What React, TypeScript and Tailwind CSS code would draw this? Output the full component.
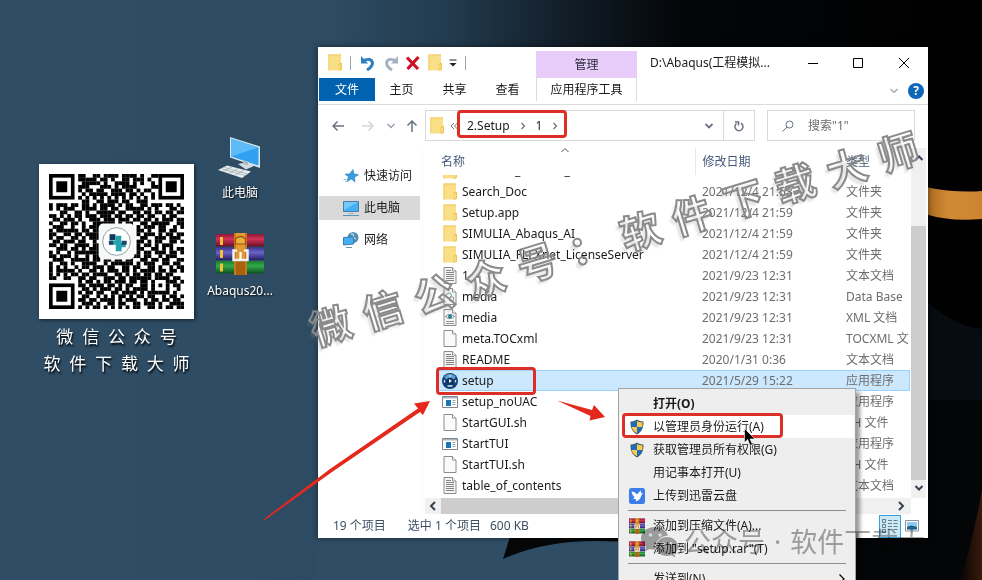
import type { ReactNode } from 'react';

const QR_ROWS = [
  '........##..##.####.####.#..##.......',
  '........#####.##.#..##.###.#.........',
  '.........#####.#..####.#.#..#........',
  '........###...###.#.####....##.......',
  '........#.##.##..###.##.#.##.........',
  '.........#.#####.####.##.#..#........',
  '........#.#.#.#.#.#.#.#.#.#.#........',
  '.........##..##.###.##..###..........',
  '#.###.##.##.#.####.#.##..##.###.##.#.',
  '#.#.###..####.##.##..#####.#.#...##.#',
  '...##..##.#..#####.##..##.##.##.##.##',
  '##.#.#.##.###.###.##.##.##.##..#.##..',
  '.##.###.#..###.###.###.##.##.#.###.##',
  '#..##.##.#..######.#.##..##.#####..##',
  '.###..#..#.###.#........#.###.##..#.#',
  '#.######.##.##..........##.#..##.##..',
  '##..##.##.####..........#.###.#.##.##',
  '#.##..##.#.###...........##..###.###.',
  '.##.###.##..#...........##.#.##..##.#',
  '##.##..####.##..........#.##.#.###...',
  '..###.##.#.###..........##..##.#.#.##',
  '#.#..#.#######..........#.##.###.##.#',
  '##.###.#..#.####.......##.##..#.###..',
  '.###..#####.##.##.##.##..##.##.##..##',
  '#..##.#..####..#.######.#.###..##.##.',
  '#.#.#..#.##.###.##..##.##..##.#..#.##',
  '#.#####.#..##.#.###.##.#.####.##.##.#',
  '#.#.#.##.##.####..##.#.##.##.##.##...',
  '##..##..##.##..###.##.######.####.##.',
  '........#.##.#.##.###.##.##.#...###.#',
  '........##.####.##.#.##..##.#.#.#.##.',
  '.........##.#.###.##.#.####.#...#..#.',
  '........#.##.##..##.####.#.######.#..',
  '.........##..#.#.#.##.#.##.##..#.##.#',
  '........##.##.####.#.###..#.##.##.##.',
  '.........###.#..##.##..##.###.#..####',
  '........#.#.##.#.#.#.#.##..##.#.##.##',
];

function QrFinder({ x, y }: { x: number; y: number }) {
  return (
    <g>
      <rect x={x} y={y} width="7" height="7" fill="#000" />
      <rect x={x + 1} y={y + 1} width="5" height="5" fill="#fff" />
      <rect x={x + 2} y={y + 2} width="3" height="3" fill="#000" />
    </g>
  );
}

function QrCode() {
  return (
    <svg viewBox="0 0 37 37" className="block w-full" role="img" aria-label="QR">
      <g>
        {QR_ROWS.map((row, y) =>
          row.split('').map((cell, x) => (cell === '#' ? <rect key={`${x}-${y}`} x={x} y={y} width="1.040" height="1.040" /> : null)),
        )}
      </g>
      <QrFinder x={0} y={0} />
      <QrFinder x={30} y={0} />
      <QrFinder x={0} y={30} />
      <rect x="13.6" y="13.6" width="9.8" height="9.8" rx="1.2" fill="#f7f8f8" />
      <circle cx="18.5" cy="18.5" r="3.8" fill="#fff" stroke="#6b7f86" strokeWidth=".2" />
      <path d="M16.6 16.5h1.6v1.6h-1.6z" fill="#123a5a" />
      <path d="M18.2 16.9h1.6v2h1.2v1.2h-1.1v1.1h-1.6v-1.8h-1.7v-1.2h1.6z" fill="#22a3ae" />
      <path d="M19.9 18.3h1.4v1.1h-1.4zM16.4 18.3h1.2v1.1h-1.2z" fill="#1d4a6b" />
    </svg>
  );
}

function Folder({ className = '' }: { className?: string }) {
  return (
    <svg viewBox="0 0 14 17" className={`h-[17px] w-[14px] shrink-0 ${className}`}>
      <path d="M.5 .5h12.500v16H.5z" fill="#fbdf86" />
      <path d="M.5 .5h12.500v1H.5zM.5 .5h1v16h-1z" fill="#f0cb60" />
      <path d="M10.500 10.500l1-1.500h2.500v6.500l-1 1h-2.500z" fill="#efc650" />
      <path d="M11.500 10.500h1v5h-1z" fill="#fdeeb4" />
    </svg>
  );
}

function Doc({ kind }: { kind: 'text' | 'blank' | 'db' | 'xml' }) {
  return (
    <svg viewBox="0 0 14 17" className="h-[17px] w-[14px] shrink-0">
      <path d="M1 .5h8.500l3.500 3.500v12.500H1z" fill={kind === 'blank' ? '#fbfbfb' : '#f4f4f4'} stroke="#8c8c8c" />
      <path d="M9.500 .5V4H13" fill="#fff" stroke="#8c8c8c" />
      {kind === 'text' && <path d="M3 5.500h8M3 7.500h8M3 9.500h8M3 11.500h8M3 13.500h8M3 3.500h5" stroke="#858585" />}
      {kind === 'db' && (
        <g fill="none" stroke="#5f9ea0">
          <circle cx="6" cy="7.500" r="2.500" />
          <circle cx="8.500" cy="11" r="2.300" stroke="#8b9498" />
        </g>
      )}
      {kind === 'xml' && (
        <g>
          <path d="M2.500 7.500Q7 3.500 11.500 7.500Q7 11.500 2.500 7.500" fill="#fff" stroke="#6c8a94" />
          <circle cx="7" cy="7.500" r="2" fill="#2b7f8e" />
          <path d="M3 12.500h8M3 14.500h8" stroke="#999" />
        </g>
      )}
    </svg>
  );
}

function ExeIcon() {
  return (
    <svg viewBox="0 0 16 12" className="h-[12px] w-[16px] shrink-0">
      <path d="M.5 .5h15v11H.5z" fill="#fff" stroke="#7d8792" />
      <path d="M1 1h14v1.500H1z" fill="#aab4bf" />
      <path d="M4 4h5v6H4z" fill="#1977b8" />
      <path d="M10.500 4.500h3M10.500 6.500h3M10.500 8.500h3" stroke="#9aa3ad" />
    </svg>
  );
}

function SetupIcon() {
  return (
    <svg viewBox="0 0 16 16" className="h-4 w-4 shrink-0">
      <circle cx="8" cy="8" r="8" fill="#123f73" />
      <ellipse cx="8" cy="4" rx="5.500" ry="3" fill="#5b9fd0" />
      <circle cx="8" cy="8" r="3.200" fill="#0d2f5c" />
      <path d="M7 6v4l3-2z" fill="#e8f4ff" />
      <path d="M8 2v2M2.500 7v2.500M13.500 7v2.500M5.500 13h5" stroke="#cfe6f8" strokeWidth="1.300" />
    </svg>
  );
}

function Shield() {
  return (
    <svg viewBox="0 0 16 16" className="h-4 w-4">
      <path d="M8 .5C10 2 12.500 2.500 14.500 2.500 14.800 9 12.500 13 8 15.500 3.500 13 1.200 9 1.500 2.500 3.500 2.500 6 2 8 .5z" fill="#3e5a6b" />
      <path d="M8 2v6H2.600C2.500 6.600 2.400 5 2.500 3.500 4.500 3.400 6.500 3 8 2z" fill="#1c6fbf" />
      <path d="M8 2v6h5.400c.1-1.400.2-3 .1-4.500C11.500 3.400 9.500 3 8 2z" fill="#fbc94a" />
      <path d="M8 8v6.300C4.800 12.500 3.100 10.500 2.600 8z" fill="#fbc94a" />
      <path d="M8 8v6.300c3.200-1.800 4.900-3.800 5.400-6.300z" fill="#1c6fbf" />
    </svg>
  );
}

function RarIcon({ className = '' }: { className?: string }) {
  return (
    <svg viewBox="0 0 48 42" preserveAspectRatio="none" className={className}>
      <defs>
        <linearGradient id="rarRed" x1="0" y1="0" x2="0" y2="1">
          <stop offset="0" stopColor="#8d1733" /><stop offset=".4" stopColor="#d13357" /><stop offset="1" stopColor="#6b0f26" />
        </linearGradient>
        <linearGradient id="rarBlue" x1="0" y1="0" x2="0" y2="1">
          <stop offset="0" stopColor="#3b3590" /><stop offset=".4" stopColor="#6a63c8" /><stop offset="1" stopColor="#262062" />
        </linearGradient>
        <linearGradient id="rarGreen" x1="0" y1="0" x2="0" y2="1">
          <stop offset="0" stopColor="#1a7d30" /><stop offset=".4" stopColor="#34ab4b" /><stop offset="1" stopColor="#0d4e1c" />
        </linearGradient>
      </defs>
      <path d="M0 1h48v12.500H0z" fill="url(#rarRed)" />
      <path d="M0 14.500h48v12.500H0z" fill="url(#rarBlue)" />
      <path d="M0 28h48v12.500H0z" fill="url(#rarGreen)" />
      <path d="M4 4h3v8H4zM4 17h3v8H4zM4 30.500h3v8H4z" fill="#f5c033" />
      <path d="M18 0h13v42H18z" fill="#c47a1c" />
      <path d="M20 0h9v42h-9z" fill="#e39a31" />
      <path d="M19.500 11V6q5-5 10 0v5z" fill="#f0ad3e" stroke="#8f5410" strokeWidth="1.200" />
      <path d="M20 28h9v14h-9z" fill="#a9600f" />
      <path d="M21 17.500h-3.500v9.500h14v-9.500H28" fill="none" stroke="#eef0f2" strokeWidth="2.500" />
      <path d="M24.500 19v8" stroke="#fff" strokeWidth="2.200" />
    </svg>
  );
}

function Monitor() {
  return (
    <svg viewBox="0 0 18 16" className="h-4 w-[18px] shrink-0">
      <path d="M1.500 1.500h15v10h-15z" fill="#43b0f5" stroke="#4b7da3" />
      <path d="M2 2h14L2 10z" fill="#75c9fb" />
      <path d="M6 13.500h6" stroke="#9bb6c9" />
      <path d="M1 15.500h16" stroke="#5f90b5" />
    </svg>
  );
}

function NetworkIcon() {
  return (
    <svg viewBox="0 0 18 18" className="h-[18px] w-[18px] shrink-0">
      <circle cx="11" cy="6.500" r="5.500" fill="#4f8fb5" />
      <path d="M9 2.500q3 .5 2.500 2.500t2.500 3" stroke="#b9dcec" fill="none" strokeWidth="1.300" />
      <path d="M1.500 6.500l10-.5v7l-10 1z" fill="#43b0f5" stroke="#397eaf" />
      <path d="M4 16.500h6" stroke="#7096ad" />
    </svg>
  );
}

function StarIcon() {
  return (
    <svg viewBox="0 0 18 16" className="h-4 w-[18px] shrink-0">
      <path d="M11 1.500l1 4.500 4.500.8-4 2.400.5 4.800-3.500-3-4.500 2.500 1.500-4.700-3.500-2.600 4.700-.4z" fill="#3b9be0" stroke="#2a7dbb" strokeWidth=".6" />
      <path d="M1.500 11.500h3M3 13.500h2" stroke="#8bc2e8" />
    </svg>
  );
}

function Stroke({ d, className, width = 1.5 }: { d: string; className: string; width?: number }) {
  return (
    <svg viewBox="0 0 12 12" className={`h-3 w-3 shrink-0 ${className}`} fill="none" stroke="currentColor" strokeWidth={width}>
      <path d={d} />
    </svg>
  );
}

const CHEVRON_DOWN = 'M2.500 4L6 7.500L9.500 4';
const CHEVRON_RIGHT = 'M4.500 3L7.500 6L4.500 9';
const CHEVRON_LEFT = 'M8 2L4 6l4 4';
const CHEVRON_UP = 'M2.500 8L6 4.500 9.500 8';

type FileRow = { name: string; date: string; type: string; icon: ReactNode; selected?: boolean };

const FILES: FileRow[] = [
  { name: 'Search_Doc', date: '2021/12/4 21:53', type: '文件夹', icon: <Folder /> },
  { name: 'Setup.app', date: '2021/12/4 21:59', type: '文件夹', icon: <Folder /> },
  { name: 'SIMULIA_Abaqus_AI', date: '2021/12/4 21:59', type: '文件夹', icon: <Folder /> },
  { name: 'SIMULIA_FLEXnet_LicenseServer', date: '2021/12/4 21:59', type: '文件夹', icon: <Folder /> },
  { name: '1', date: '2021/9/23 12:31', type: '文本文档', icon: <Doc kind="text" /> },
  { name: 'media', date: '2021/9/23 12:31', type: 'Data Base', icon: <Doc kind="db" /> },
  { name: 'media', date: '2021/9/23 12:31', type: 'XML 文档', icon: <Doc kind="xml" /> },
  { name: 'meta.TOCxml', date: '2021/9/23 12:31', type: 'TOCXML 文', icon: <Doc kind="blank" /> },
  { name: 'README', date: '2020/1/31 0:36', type: '文本文档', icon: <Doc kind="text" /> },
  { name: 'setup', date: '2021/5/29 15:22', type: '应用程序', icon: <SetupIcon />, selected: true },
  { name: 'setup_noUAC', date: '', type: '应用程序', icon: <ExeIcon /> },
  { name: 'StartGUI.sh', date: '', type: 'SH 文件', icon: <Doc kind="blank" /> },
  { name: 'StartTUI', date: '', type: '应用程序', icon: <ExeIcon /> },
  { name: 'StartTUI.sh', date: '', type: 'SH 文件', icon: <Doc kind="blank" /> },
  { name: 'table_of_contents', date: '', type: '文本文档', icon: <Doc kind="text" /> },
];

function Wallpaper() {
  return (
    <svg viewBox="0 0 982 580" preserveAspectRatio="none" className="absolute inset-0 h-full w-full">
      <defs>
        <linearGradient id="sky" x1="0" y1="0" x2="1" y2="0">
          <stop offset="0" stopColor="#2f4e66" />
          <stop offset=".34" stopColor="#2d4b62" />
          <stop offset=".46" stopColor="#223a4d" />
          <stop offset=".58" stopColor="#111d27" />
          <stop offset=".7" stopColor="#030507" />
          <stop offset="1" stopColor="#000" />
        </linearGradient>
        <linearGradient id="band" x1="0" y1="0" x2="1" y2="0">
          <stop offset="0" stopColor="#a9681f" /><stop offset=".4" stopColor="#d08a35" /><stop offset="1" stopColor="#cc8431" />
        </linearGradient>
        <linearGradient id="ember" x1="0" y1="0" x2="1" y2="0">
          <stop offset="0" stopColor="#060504" /><stop offset="1" stopColor="#3a1a0c" />
        </linearGradient>
      </defs>
      <path d="M0 0h982v580H0z" fill="url(#sky)" />
      <path d="M318 520h350v60H318z" fill="#2f4e66" />
      <path d="M512 530L503 559Q545 540 600 541L640 542V530z" fill="#050709" />
      <path d="M850 400h132v180H850z" fill="#040506" />
      <path d="M925 300Q960 330 982 328V400H925z" fill="#070b12" />
      <path d="M925 187Q955 193 982 191V219Q950 222 925 214z" fill="url(#band)" />
      <path d="M982 490V580H960Q973 540 982 490z" fill="url(#ember)" />
    </svg>
  );
}

function TitleBar() {
  return (
    <div className="flex h-[31px] items-center">
      <div className="flex w-[218px] shrink-0 items-center pl-2.5">
        <Folder />
        <span className="ml-2 h-3.5 w-px bg-gray-400" />
        <button aria-label="撤消" className="ml-[9px] h-4 w-4">
          <svg viewBox="0 0 16 16" className="h-4 w-4" fill="none" stroke="#2f7ec4" strokeWidth="3">
            <path d="M4 5.500Q11 2.500 12.500 7.500Q12.500 12 7 15" />
            <path d="M1 1v7.500h7z" fill="#2f7ec4" stroke="none" />
          </svg>
        </button>
        <button aria-label="恢复" className="ml-[7px] h-4 w-4">
          <svg viewBox="0 0 16 16" className="h-4 w-4" fill="none" stroke="#a5b2c6" strokeWidth="3">
            <path d="M12 5.500Q5 2.500 3.500 7.500Q3.500 12 9 15" />
            <path d="M15 1v7.500H8z" fill="#a5b2c6" stroke="none" />
          </svg>
        </button>
        <button aria-label="删除" className="ml-1.5 h-4 w-4">
          <svg viewBox="0 0 16 16" className="h-4 w-4" stroke="#ce1126" strokeWidth="3.200">
            <path d="M2 2.500l11 11.500M13.500 2L2.500 14" />
          </svg>
        </button>
        <Folder className="ml-[7px]" />
        <button aria-label="自定义快速访问工具栏" className="ml-[5px] h-3 w-3">
          <svg viewBox="0 0 12 12" className="h-3 w-3"><path d="M2.500 2.500h7v1h-7zM2.500 6h7L6 9.500z" fill="#222" /></svg>
        </button>
        <span className="ml-1.5 h-3.5 w-px bg-gray-400" />
      </div>
      <div className="flex h-full w-[101px] shrink-0 items-center justify-center pt-1">
        <span className="flex h-[27px] w-full items-center justify-center bg-[#e8cdfb] text-[#2b2b3b]">管理</span>
      </div>
      <span className="ml-[13px] flex-1 truncate">D:\Abaqus(工程模拟...</span>
      <div className="flex h-full shrink-0 pr-px">
        <button aria-label="最小化" className="flex w-[45px] items-center justify-center"><Stroke d="M1 6.500h10" width={1} className="text-black" /></button>
        <button aria-label="最大化" className="flex w-[45px] items-center justify-center"><Stroke d="M1.500 1.500h9v9h-9z" width={1} className="text-black" /></button>
        <button aria-label="关闭" className="flex w-[47px] items-center justify-center"><Stroke d="M1 1l10 10M11 1L1 11" width={1} className="text-black" /></button>
      </div>
    </div>
  );
}

function RibbonTabs() {
  return (
    <div className="flex h-[27px] items-start border-b border-[#dadbdc] pl-px">
      <button className="h-[23px] w-14 bg-[#0063b1] text-white">文件</button>
      <button className="h-[23px] w-[53px]">主页</button>
      <button className="h-[23px] w-[53px]">共享</button>
      <button className="mr-[2px] h-[23px] w-[53px]">查看</button>
      <button className="h-[23px] w-[101px] border-x border-[#dadbdc]">应用程序工具</button>
      <span className="flex-1" />
      <button aria-label="展开功能区" className="mr-2 flex h-[26px] items-center"><Stroke d={CHEVRON_DOWN} width={1.2} className="text-gray-400" /></button>
      <button aria-label="帮助" className="mt-[5px] mr-1 h-4 w-4 rounded-full bg-[#0f67b8] text-[12px] leading-4 font-bold text-white">?</button>
    </div>
  );
}

function AddressBar() {
  return (
    <div className="mt-[5px] flex h-[31px] items-center pr-[13px] pl-3.5">
      <button aria-label="后退" className="h-3 w-3"><Stroke d="M12 6H1M5.500 1.500L1 6l4.500 4.500" className="text-gray-500" /></button>
      <button aria-label="前进" className="ml-[18px] h-3 w-3"><Stroke d="M0 6h11M6.500 1.500L11 6l-4.500 4.500" className="text-gray-300" /></button>
      <button aria-label="最近" className="ml-[11px] h-3 w-3"><Stroke d={CHEVRON_DOWN} className="text-gray-400" /></button>
      <button aria-label="向上" className="ml-[9px] h-3 w-3"><Stroke d="M6 12V1M1.500 5.500L6 1l4.500 4.500" className="text-gray-500" /></button>
      <div className="ml-[7px] flex h-full flex-1 items-center border border-[#d9d9d9] pl-1">
        <Folder />
        <svg viewBox="0 0 8 8" className="ml-1.5 h-2 w-2" fill="none" stroke="#777"><path d="M4 1L1 4l3 3M7.500 1l-3 3 3 3" /></svg>
        <button className="ml-[9px]">2.Setup</button>
        <Stroke d={CHEVRON_RIGHT} width={1.3} className="ml-[7px] text-gray-500" />
        <button className="ml-[7px]">1</button>
        <Stroke d={CHEVRON_RIGHT} width={1.3} className="ml-[7px] text-gray-500" />
        <span className="flex-1" />
        <button aria-label="历史" className="mr-2 h-3 w-3"><Stroke d={CHEVRON_DOWN} width={1.8} className="text-gray-500" /></button>
        <button aria-label="刷新" className="flex h-full w-[31px] items-center justify-center border-l border-[#d9d9d9]">
          <Stroke d="M8 3.200A4 4 0 1 1 3.500 3.500M2 2h3.500v3.500" width={1.5} className="text-gray-500" />
        </button>
      </div>
      <label className="ml-3 flex h-full w-[148px] items-center border border-[#d9d9d9] pl-3.5">
        <Stroke d="M7.500 1a3.500 3.500 0 1 1 0 7a3.500 3.500 0 1 1 0-7M5 7L.5 11.500" width={1} className="text-gray-500" />
        <input aria-label="搜索" placeholder={'搜索"1"'} className="ml-3.5 w-20 bg-transparent outline-none placeholder:text-[#6d6d6d]" />
      </label>
    </div>
  );
}

function NavPane() {
  const items = [
    { label: '快速访问', icon: <StarIcon /> },
    { label: '此电脑', icon: <Monitor />, active: true },
    { label: '网络', icon: <NetworkIcon /> },
  ];
  return (
    <nav className="flex w-[105px] shrink-0 flex-col gap-2 border-r border-gray-50 pt-4 pr-[2px] pl-px">
      {items.map((item) => (
        <a key={item.label} href="#" className={`flex h-6 items-center gap-1 pl-[23px] ${item.active ? 'bg-[#d9d9d9]' : ''}`}>
          {item.icon}
          {item.label}
        </a>
      ))}
    </nav>
  );
}

function FileTable() {
  return (
    <table className="w-full table-fixed border-collapse whitespace-nowrap">
      <colgroup>
        <col />
        <col className="w-[144px]" />
        <col className="w-[71px]" />
      </colgroup>
      <thead>
        <tr className="h-[27px] text-left text-[#44587a]">
          <th className="relative border-r border-gray-200 p-0 pl-1 font-normal">
            名称
            <Stroke d={CHEVRON_UP} width={1} className="absolute -top-1 left-[122px] text-gray-600" />
          </th>
          <th className="p-0 pl-[7px] font-normal">修改日期</th>
          <th className="p-0 pl-[7px] font-normal">类型</th>
        </tr>
      </thead>
      <tbody>
        <tr>
          <td className="p-0">
            <div className="flex h-1.5 items-end overflow-hidden pl-1.5">
              <div className="flex h-[21px] shrink-0 items-center gap-[5px]"><Folder />Extended_Product_</div>
            </div>
          </td>
          <td className="p-0" />
          <td className="p-0" />
        </tr>
        {FILES.map((file, i) => (
          <tr key={i} className={`h-[21px] ${file.selected ? 'bg-[#cce8ff] outline -outline-offset-1 outline-[#99d1ff]' : ''}`}>
            <td className="p-0 pl-[5px]">
              <div className="flex h-[21px] items-center">
                <span className="mr-1 flex w-4 justify-center">{file.icon}</span>
                {file.name}
              </div>
            </td>
            <td className="p-0 pl-[7px] text-[#6d6d6d]">{file.date}</td>
            <td className="overflow-hidden p-0 pl-[7px] text-[#6d6d6d]">{file.type}</td>
          </tr>
        ))}
      </tbody>
    </table>
  );
}

function ExplorerWindow() {
  return (
    <section className="absolute top-[47px] left-[318px] w-[610px] bg-white shadow-[0_0_6px_rgba(0,0,0,0.5)]">
      <TitleBar />
      <RibbonTabs />
      <AddressBar />
      <div className="mt-[7px] flex">
        <NavPane />
        <div className="flex min-w-0 flex-1 flex-col pr-0.5 pl-0.5">
          <div className="flex">
            <div className="h-[350px] min-w-0 flex-1 pr-px pl-3"><FileTable /></div>
            <div className="flex w-[15px] flex-col items-center bg-[#f0f0f0]">
              <Stroke d={CHEVRON_UP} width={2} className="mt-1 text-gray-700" />
              <div className="mt-[62px] w-full flex-1 bg-[#cdcdcd]" />
              <Stroke d={CHEVRON_DOWN} width={2} className="mt-0.5 mb-1 text-gray-700" />
            </div>
          </div>
          <div className="mr-[15px] flex h-4 items-center bg-[#f0f0f0]">
            <Stroke d={CHEVRON_LEFT} width={2} className="mr-0.5 ml-0.5 text-gray-700" />
            <div className="h-full w-80 bg-[#cdcdcd]" />
            <span className="flex-1" />
            <Stroke d="M4 2l4 4-4 4" width={2} className="mr-1 text-gray-700" />
          </div>
        </div>
      </div>
      <footer className="flex h-6 items-center pr-[9px] pl-[15px] text-[#3c5064]">
        <span>19 个项目</span>
        <span className="ml-[22px]">选中 1 个项目</span>
        <span className="ml-[9px]">600 KB</span>
        <span className="flex-1" />
        <button aria-label="详细信息" className="flex h-[23px] w-[22px] items-center justify-center border border-[#3c9fd6] bg-[#cbe8f6]">
          <svg viewBox="0 0 16 16" className="h-4 w-4" fill="none" stroke="#6b7d8a">
            <path d="M.5 1.500h3v3h-3zM.5 6.500h3v3h-3zM.5 11.500h3v3h-3zM6 2.500h4M11.500 2.500h4M6 5.500h4M11.500 5.500h4M6 8.500h4M11.500 8.500h4M6 11.500h4M11.500 11.500h4" />
          </svg>
        </button>
        <button aria-label="大图标" className="ml-1">
          <svg viewBox="0 0 14 12" className="h-3 w-3.5">
            <path d="M.5 .5h13v10.500H.5z" fill="#fff" stroke="#8593a0" />
            <path d="M2 2h10v7.500H2z" fill="#8ecbf0" />
            <path d="M2 7q4-3 10 0v2.500H2z" fill="#24608a" />
          </svg>
        </button>
      </footer>
    </section>
  );
}

function BirdIcon() {
  return (
    <svg viewBox="0 0 16 16" className="h-4 w-4">
      <rect width="16" height="16" rx="2.500" fill="#3b7de9" />
      <path d="M2.500 3.500Q6 3.500 8 6.500L11.500 2.500Q11.500 5 14 5.500Q12 6.500 12 8.500Q11 12.500 6.500 13.500Q7.500 12 7 11Q5 11.500 4 10Q5.500 10 5.500 9Q3 7 2.500 3.500z" fill="#fff" />
    </svg>
  );
}

function MenuItem({ icon, label, bold, hot, arrow }: { icon?: ReactNode; label: string; bold?: boolean; hot?: boolean; arrow?: boolean }) {
  return (
    <button role="menuitem" className={`flex h-[23px] w-full shrink-0 items-center text-left ${bold ? 'font-bold' : ''} ${hot ? 'bg-white' : ''}`}>
      <span className="mr-2 ml-[9px] flex w-4">{icon}</span>
      <span className="flex-1">{label}</span>
      {arrow && <Stroke d="M3.500 1.500L8 6l-4.500 4.500" width={1.2} className="mr-1.5 text-black" />}
    </button>
  );
}

function ContextMenu() {
  const line = <hr className="mx-2 my-[3px] border-t border-[#8e8e8e]" />;
  return (
    <div role="menu" className="absolute top-[388px] left-[618px] w-[238px] border border-[#a5a5a5] bg-[#eeeeee] px-px pt-[3px] shadow-[4px_4px_4px_rgba(0,0,0,0.4)]">
      <MenuItem label="打开(O)" bold />
      <MenuItem label="以管理员身份运行(A)" icon={<Shield />} hot />
      <MenuItem label="获取管理员所有权限(G)" icon={<Shield />} />
      <MenuItem label="用记事本打开(U)" />
      <MenuItem label="上传到迅雷云盘" icon={<BirdIcon />} />
      {line}
      <MenuItem label="添加到压缩文件(A)..." icon={<RarIcon className="h-4 w-4" />} />
      <MenuItem label={'添加到 "setup.rar"(T)'} icon={<RarIcon className="h-4 w-4" />} />
      {line}
      <MenuItem label="发送到(N)" arrow />
    </div>
  );
}

function ComputerIcon() {
  return (
    <svg viewBox="0 0 44 42" className="h-[42px] w-11">
      <path d="M12 0L42 9.500V31L12 20.500z" fill="#dbe7ee" />
      <path d="M13 1.500L40.500 10.500V28.500L13 19.500z" fill="#2fa1f0" />
      <path d="M13 1.500L40.500 10.500 13 19.500z" fill="#5dbcf8" />
      <path d="M20 27l9-2 8 3.500-9 4z" fill="#d5dce0" />
      <path d="M25 23l5 1.500v4l-5-1.500z" fill="#aeb9c0" />
      <path d="M9 28.500L33 34.500 24 41 0 33z" fill="#e8ecee" />
      <path d="M6.500 30.500l23 6.500M4 32l23 6.500M14 30l-9 4.500M20 31.500l-9 5M26 33l-9 5.500" stroke="#9aa5ac" strokeWidth=".7" />
    </svg>
  );
}

function DesktopShortcut({ className, icon, label }: { className: string; icon: ReactNode; label: string }) {
  return (
    <a href="#" className={`absolute flex w-20 flex-col items-center text-white [text-shadow:1px_1px_2px_#000] ${className}`}>
      {icon}
      <span>{label}</span>
    </a>
  );
}

function Annotations() {
  return (
    <>
      <div className="absolute top-[110px] left-[457px] h-7 w-[110px] rounded-sm border-3 border-[#dc3027]" />
      <div className="absolute top-[367px] left-[436px] h-7 w-[100px] rounded-sm border-3 border-[#dc3027]" />
      <div className="absolute top-[413px] left-[622px] h-[25px] w-[161px] rounded-sm border-3 border-[#dc3027]" />
      <svg className="absolute top-[395px] left-[260px] h-32 w-[350px]" viewBox="0 0 350 128" fill="#e5281c">
        <path d="M4 124L70 74 158 13.500 154 8.500 170 6 163 20 160 17 72 77 5 125z" />
        <path d="M297 5.500L332 15 334 10 345 22 329.500 25.500 330.500 21z" />
      </svg>
      <svg className="absolute top-[428px] left-[744px] h-[19px] w-3" viewBox="0 0 12 19">
        <path d="M.5 .5v14l3.200-3 2.300 6 2.500-1-2.500-5.500h5z" fill="#000" stroke="#fff" strokeWidth=".6" />
      </svg>
    </>
  );
}

function Watermarks() {
  return (
    <>
      <div className="pointer-events-none absolute top-[240px] left-[615px] -translate-x-1/2 -translate-y-1/2 -rotate-[17deg] font-['DejaVu_Sans','Noto_Sans_CJK_SC',sans-serif] text-[40px] leading-none font-bold whitespace-nowrap text-transparent [-webkit-text-stroke:2px_#8a8a8a] [text-shadow:-4px_3px_2px_rgba(140,140,140,0.22)]">
        微 信 公 众 号 ： 软 件 下 载 大 师
      </div>
      <div className="pointer-events-none absolute top-[526px] left-[640px] flex items-center gap-1.5 text-[27px] leading-7 whitespace-nowrap text-[#a6a6a6] mix-blend-multiply">
        <svg viewBox="0 0 38 32" className="h-8 w-[38px]">
          <path d="M15 1C7 1 1 6 1 12.500c0 3.500 2 6.500 5 8.500L4.500 25.500l5-2.500c2 .6 4 .8 6 .8C14 16 20 10 28 9.500 26 4 21 1 15 1z" fill="#a6a6a6" />
          <path d="M27 11c-6.500 0-11 4.500-11 9.500s4.500 9.500 11 9.500c1.500 0 3-.2 4.300-.7l4 2.200-1.100-3.700c2.300-1.700 3.800-4.300 3.800-7.300C38 15.500 33.500 11 27 11z" fill="#a6a6a6" />
          <g fill="#e8e8e8"><circle cx="10.500" cy="9" r="1.800" /><circle cx="20" cy="9" r="1.800" /><circle cx="23.500" cy="17.500" r="1.400" /><circle cx="31" cy="17.500" r="1.400" /></g>
        </svg>
        <span>公众号<span className="px-[9px]">·</span>软件下载大</span>
      </div>
    </>
  );
}

export default function App() {
  return (
    <main className="relative isolate h-screen w-full overflow-hidden bg-[#2f4e66] font-['Noto_Sans','Noto_Sans_CJK_SC',sans-serif] text-[12px] leading-4 text-[#1a1a1a]">
      <Wallpaper />
      <figure className="absolute top-[164px] left-[39px] w-[155px]">
        <div className="bg-white p-[10px] shadow-[1px_1px_4px_rgba(0,0,0,0.6)]"><QrCode /></div>
        <figcaption className="mt-1 text-center text-[17px] leading-[27px] whitespace-pre text-white [text-shadow:1px_2px_2px_#000]">
          {'微  信  公  众  号\n软  件  下  载  大  师'}
        </figcaption>
      </figure>
      <DesktopShortcut className="top-[137px] left-[200px] gap-1.5" icon={<ComputerIcon />} label="此电脑" />
      <DesktopShortcut className="top-[233px] left-[200px] gap-2" icon={<RarIcon className="h-[42px] w-12" />} label="Abaqus20..." />
      <ExplorerWindow />
      <ContextMenu />
      <Annotations />
      <Watermarks />
    </main>
  );
}
